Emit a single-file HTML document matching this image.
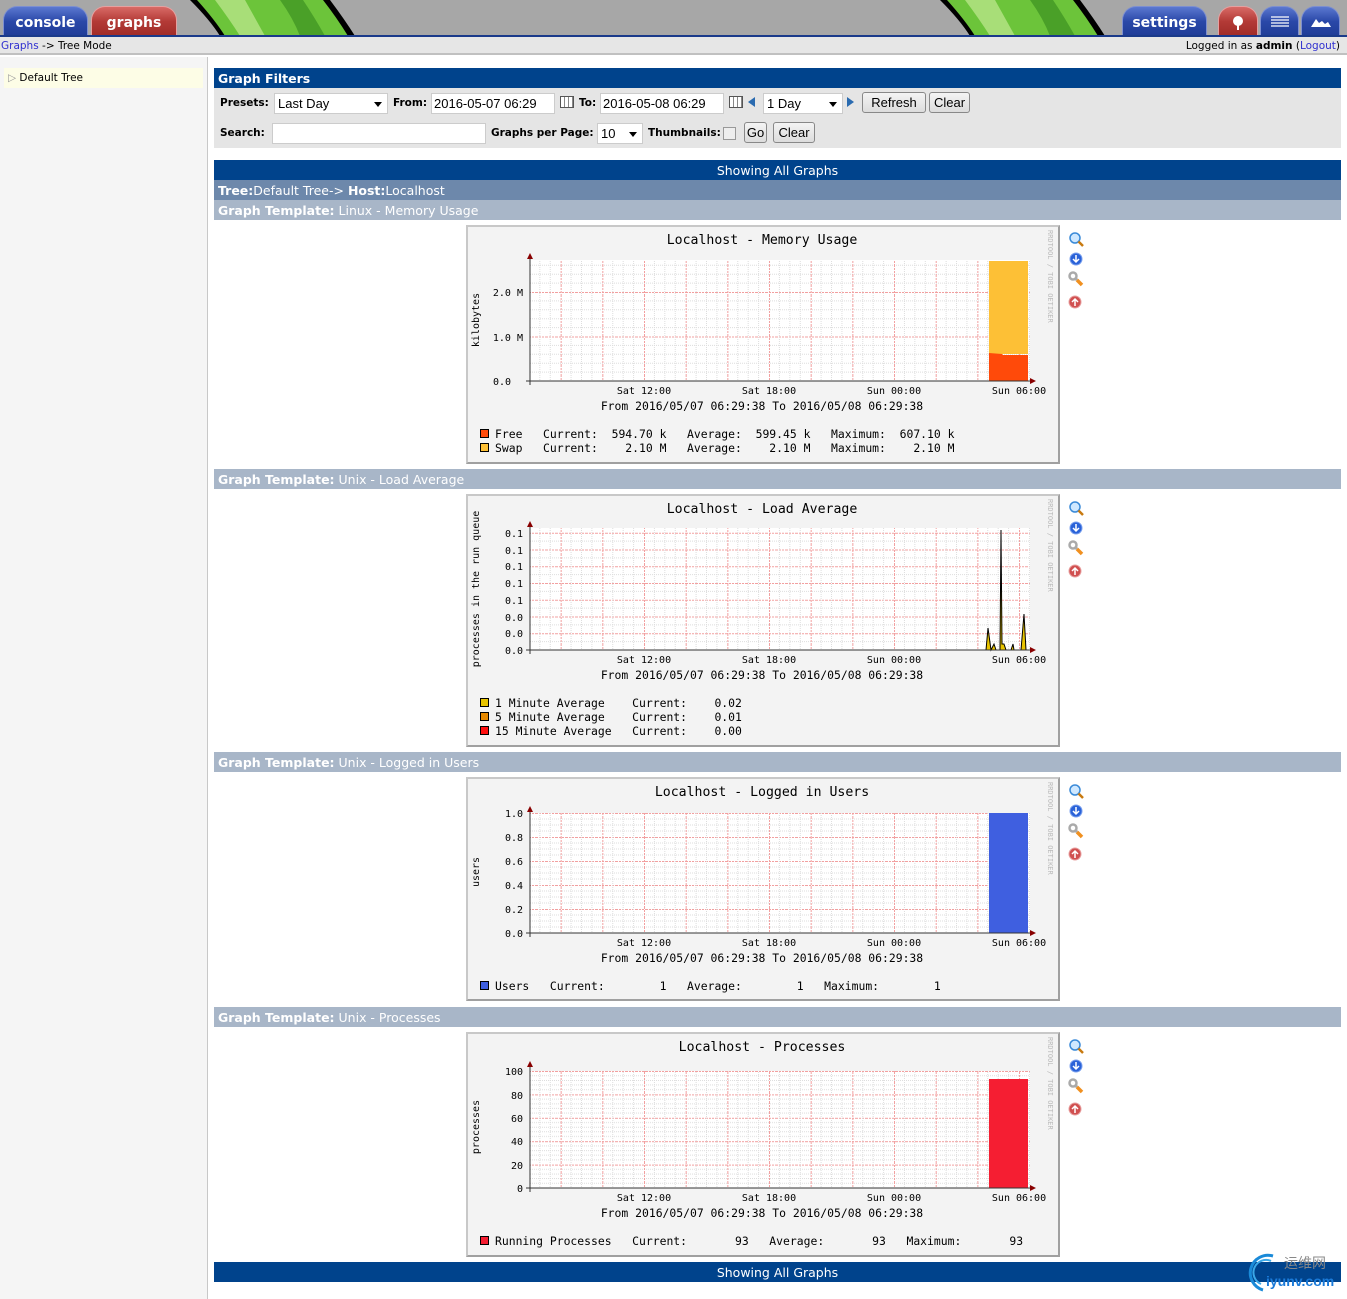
<!DOCTYPE html>
<html><head><meta charset="utf-8">
<style>
*{margin:0;padding:0;box-sizing:border-box}
body{width:1347px;height:1299px;position:relative;background:#fff;font-family:"DejaVu Sans","Liberation Sans",sans-serif;font-size:11px;overflow:hidden}
.a{position:absolute}
.tab{position:absolute;top:6px;height:30px;border-radius:14px 14px 0 0;color:#fff;font-weight:bold;font-size:14px;text-align:center;line-height:32px;border:1px solid #7d8fd0;border-bottom:none}
.blue{background:linear-gradient(#5b78d0,#2a48a8 50%,#1f3c97)}
.red{background:linear-gradient(#d86a66,#b33a36 50%,#a02c28);border-color:#e6a0a0}
.bar{position:absolute;left:214px;width:1127px;height:20px;color:#fff;font-size:12.5px;line-height:22px;padding-left:4px;font-family:"DejaVu Sans",sans-serif}
.tpl{background:#a8b6c8}
.gbox{position:absolute;left:466px;width:594px;background:#f3f3f3;border:2px solid #c8c8c8;border-right-color:#a0a0a0;border-bottom-color:#a0a0a0}
svg text{white-space:pre}
input.t{position:absolute;height:21px;border:1px solid #ccc;background:#fff;font-size:13px;padding-left:2px;font-family:"Liberation Sans",sans-serif}
.sel{position:absolute;height:21px;border:1px solid #ccc;background:#fff;font-size:13px;padding-left:3px;line-height:19px;font-family:"Liberation Sans",sans-serif}
.sel:after{content:"";position:absolute;right:5px;top:8px;border:4px solid transparent;border-top:5px solid #000}
.btn{position:absolute;height:21px;border:1px solid #888;border-radius:3px;background:linear-gradient(#f4f4f4,#dcdcdc);font-size:13px;line-height:19px;text-align:center;font-family:"Liberation Sans",sans-serif}
.lbl{position:absolute;font-weight:bold;font-size:10.5px}
</style></head><body>
<div class="a" style="left:0;top:0;width:1347px;height:35px;background:#a7a7a7"></div>
<svg class="a" style="left:185px;top:0" width="175" height="36"><path d="M5 0 Q25 20 35 36 H170 Q160 20 145 0Z" fill="#000"/><path d="M12 0 Q30 20 40 36 H163 Q152 18 138 0Z" fill="#6cc43a"/><path d="M30 0 Q45 20 55 36 H80 Q70 18 60 0Z" fill="#a8de78"/><path d="M95 0 Q108 18 115 36 H140 Q130 18 118 0Z" fill="#4aa028"/></svg>
<svg class="a" style="left:935px;top:0" width="175" height="36"><path d="M5 0 Q25 20 35 36 H170 Q160 20 145 0Z" fill="#000"/><path d="M12 0 Q30 20 40 36 H163 Q152 18 138 0Z" fill="#6cc43a"/><path d="M30 0 Q45 20 55 36 H80 Q70 18 60 0Z" fill="#a8de78"/><path d="M95 0 Q108 18 115 36 H140 Q130 18 118 0Z" fill="#4aa028"/></svg>
<div class="tab blue" style="left:3px;width:85px">console</div>
<div class="tab red" style="left:91px;width:86px">graphs</div>
<div class="tab blue" style="left:1122px;width:85px">settings</div>
<div class="tab red" style="left:1218px;width:40px"><svg width="16" height="16" style="margin-top:8px"><circle cx="8" cy="6" r="5" fill="#fff"/><path d="M8 9V15" stroke="#fff" stroke-width="2"/></svg></div>
<div class="tab blue" style="left:1260px;width:39px"><svg width="20" height="14" style="margin-top:8px"><path d="M1 2H19M1 5H19M1 8H19M1 11H19" stroke="#fff" stroke-width="1.3"/></svg></div>
<div class="tab blue" style="left:1301px;width:39px"><svg width="22" height="14" style="margin-top:8px"><path d="M1 12L6 4L9 8L12 6L15 9L18 7L21 12Z" fill="#fff"/></svg></div>
<div class="a" style="left:0;top:35px;width:1347px;height:2px;background:#1a3a8a"></div>
<div class="a" style="left:0;top:37px;width:1347px;height:18px;background:#e6e6e6;border-bottom:2px solid #c0c0c0"></div>
<div class="a" style="left:1px;top:40px;font-size:10.5px"><span style="color:#3030d0">Graphs</span> -&gt; Tree Mode</div>
<div class="a" style="right:7px;top:40px;font-size:10.5px">Logged in as <b>admin</b> (<span style="color:#3030d0">Logout</span>)</div>
<div class="a" style="left:0;top:57px;width:208px;height:1242px;background:#f5f5f5;border-right:1px solid #c8c8c8"></div>
<div class="a" style="left:4px;top:68px;width:199px;height:20px;background:#fdfde6"></div>
<div class="a" style="left:8px;top:72px;font-size:10.5px"><span style="color:#999">&#9655;</span> Default Tree</div>
<div class="bar" style="top:68px;background:#00438c;font-weight:bold">Graph Filters</div>
<div class="a" style="left:214px;top:88px;width:1127px;height:60px;background:#e5e5e5"></div>
<div class="lbl" style="left:220px;top:97px">Presets:</div>
<div class="sel" style="left:274px;top:93px;width:114px">Last Day</div>
<div class="lbl" style="left:393px;top:97px">From:</div>
<input class="t" style="left:431px;top:93px;width:124px" value="2016-05-07 06:29">
<div class="a" style="left:560px;top:96px;width:14px;height:12px;border:1px solid #555;background:repeating-linear-gradient(90deg,#fff 0 3px,#888 3px 4px)"></div>
<div class="lbl" style="left:579px;top:97px">To:</div>
<input class="t" style="left:600px;top:93px;width:124px" value="2016-05-08 06:29">
<div class="a" style="left:729px;top:96px;width:14px;height:12px;border:1px solid #555;background:repeating-linear-gradient(90deg,#fff 0 3px,#888 3px 4px)"></div>
<div class="a" style="left:748px;top:97px;border:5px solid transparent;border-right:7px solid #2a6bb0;border-left:none"></div>
<div class="sel" style="left:763px;top:93px;width:80px">1 Day</div>
<div class="a" style="left:847px;top:97px;border:5px solid transparent;border-left:7px solid #2a6bb0;border-right:none"></div>
<div class="btn" style="left:862px;top:92px;width:64px">Refresh</div>
<div class="btn" style="left:929px;top:92px;width:41px">Clear</div>
<div class="lbl" style="left:220px;top:127px">Search:</div>
<input class="t" style="left:272px;top:123px;width:214px">
<div class="lbl" style="left:491px;top:127px">Graphs per Page:</div>
<div class="sel" style="left:597px;top:123px;width:46px">10</div>
<div class="lbl" style="left:648px;top:127px">Thumbnails:</div>
<div class="a" style="left:723px;top:127px;width:13px;height:13px;border:1px solid #999;background:#eee"></div>
<div class="btn" style="left:744px;top:122px;width:23px">Go</div>
<div class="btn" style="left:773px;top:122px;width:42px">Clear</div>
<div class="bar" style="top:160px;background:#00438c;text-align:center;padding:0">Showing All Graphs</div>
<div class="bar" style="top:180px;background:#6d88ab"><b>Tree:</b>Default Tree-&gt; <b>Host:</b>Localhost</div>
<div class="bar tpl" style="top:200px"><b>Graph Template:</b> Linux - Memory Usage</div>
<div class="bar tpl" style="top:469px"><b>Graph Template:</b> Unix - Load Average</div>
<div class="bar tpl" style="top:752px"><b>Graph Template:</b> Unix - Logged in Users</div>
<div class="bar tpl" style="top:1007px"><b>Graph Template:</b> Unix - Processes</div>
<div class="bar" style="top:1262px;background:#00438c;text-align:center;padding:0">Showing All Graphs</div>

<svg width="0" height="0" style="position:absolute">
<defs>
<pattern id="pv" patternUnits="userSpaceOnUse" x="178" y="0" width="41.67" height="10">
<path d="M10.42 0V10M20.83 0V10M31.25 0V10" stroke="#ddd" stroke-width="1" stroke-dasharray="1,1"/>
<path d="M0.5 0V10" stroke="#f2a0a0" stroke-width="1" stroke-dasharray="2,1"/>
</pattern>
</defs>
</svg>

<div class="gbox" style="top:225px;height:239px"></div>
<svg class="a" style="left:466px;top:225px" width="594" height="239" font-family="DejaVu Sans Mono,monospace">
<defs><pattern id="h1" patternUnits="userSpaceOnUse" x="0" y="156" width="10" height="44.5"><path d="M0 8.9H10M0 17.8H10M0 26.7H10M0 35.6H10" stroke="#ddd" stroke-dasharray="1,1"/><path d="M0 0.5H10" stroke="#f2a0a0" stroke-dasharray="2,1"/></pattern></defs>
<rect x="64" y="35" width="500" height="121" fill="#fff"/>
<rect x="64" y="35" width="500" height="121" fill="url(#h1)"/>
<rect x="64" y="35" width="500" height="121" fill="url(#pv)"/>
<rect x="523" y="36" width="39" height="93" fill="#fdc036"/>
<path d="M523 128L536 129L537 130H562V156H523Z" fill="#ff4a0a"/>
<path d="M64 30V160M60 156H568" stroke="#333"/><path d="M61 34L64 28L67 34ZM564 153L570 156L564 159Z" fill="#800"/>
<text x="296" y="19" font-size="13.2" text-anchor="middle" fill="#000">Localhost - Memory Usage</text>
<text x="57" y="71" font-size="10" text-anchor="end">2.0 M</text><text x="57" y="116" font-size="10" text-anchor="end">1.0 M</text><text x="45" y="160" font-size="10" text-anchor="end">0.0</text>
<text transform="translate(13,95) rotate(-90)" font-size="10" text-anchor="middle">kilobytes</text>
<text x="178" y="169" font-size="10" text-anchor="middle">Sat 12:00</text><text x="303" y="169" font-size="10" text-anchor="middle">Sat 18:00</text><text x="428" y="169" font-size="10" text-anchor="middle">Sun 00:00</text><text x="553" y="169" font-size="10" text-anchor="middle">Sun 06:00</text>
<text x="296" y="185" font-size="11.4" text-anchor="middle">From 2016/05/07 06:29:38 To 2016/05/08 06:29:38</text>
<rect x="14.5" y="204.5" width="8" height="8" fill="#ff4a0a" stroke="#000"/><rect x="14.5" y="218.5" width="8" height="8" fill="#fdc036" stroke="#000"/>
<text x="29" y="213" font-size="11.4">Free   Current:  594.70 k   Average:  599.45 k   Maximum:  607.10 k</text>
<text x="29" y="227" font-size="11.4">Swap   Current:    2.10 M   Average:    2.10 M   Maximum:    2.10 M</text>
<text transform="translate(582,5) rotate(90)" font-size="7" fill="#bbb">RRDTOOL / TOBI OETIKER</text>
</svg>

<div class="gbox" style="top:494px;height:253px"></div>
<svg class="a" style="left:466px;top:494px" width="594" height="253" font-family="DejaVu Sans Mono,monospace">
<defs><pattern id="h2" patternUnits="userSpaceOnUse" x="0" y="156" width="10" height="16.75"><path d="M0 8.4H10" stroke="#ddd" stroke-dasharray="1,1"/><path d="M0 0.5H10" stroke="#f2a0a0" stroke-dasharray="2,1"/></pattern></defs>
<rect x="64" y="34" width="500" height="122" fill="#fff"/>
<rect x="64" y="34" width="500" height="122" fill="url(#h2)"/>
<rect x="64" y="34" width="500" height="122" fill="url(#pv)"/>
<path d="M520 156L522 134L525 156L528 150L530 156L534 156L535 36L536 150L538 150L540 156L545 156L547 150L548 156L555 156L558 120L560 156Z" fill="#e8c400" stroke="#000"/>
<path d="M64 28V160M60 156H568" stroke="#333"/><path d="M61 33L64 27L67 33ZM564 153L570 156L564 159Z" fill="#800"/>
<text x="296" y="19" font-size="13.2" text-anchor="middle">Localhost - Load Average</text>
<g font-size="10" text-anchor="end"><text x="57" y="43">0.1</text><text x="57" y="60">0.1</text><text x="57" y="76">0.1</text><text x="57" y="93">0.1</text><text x="57" y="110">0.1</text><text x="57" y="127">0.0</text><text x="57" y="143">0.0</text><text x="57" y="160">0.0</text></g>
<text transform="translate(13,95) rotate(-90)" font-size="10" text-anchor="middle">processes in the run queue</text>
<g font-size="10" text-anchor="middle"><text x="178" y="169">Sat 12:00</text><text x="303" y="169">Sat 18:00</text><text x="428" y="169">Sun 00:00</text><text x="553" y="169">Sun 06:00</text></g>
<text x="296" y="185" font-size="11.4" text-anchor="middle">From 2016/05/07 06:29:38 To 2016/05/08 06:29:38</text>
<rect x="14.5" y="204.5" width="8" height="8" fill="#e8c400" stroke="#000"/><rect x="14.5" y="218.5" width="8" height="8" fill="#e88a00" stroke="#000"/><rect x="14.5" y="232.5" width="8" height="8" fill="#ff1010" stroke="#000"/>
<g font-size="11.4"><text x="29" y="213">1 Minute Average    Current:    0.02</text><text x="29" y="227">5 Minute Average    Current:    0.01</text><text x="29" y="241">15 Minute Average   Current:    0.00</text></g>
<text transform="translate(582,5) rotate(90)" font-size="7" fill="#bbb">RRDTOOL / TOBI OETIKER</text>
</svg>

<div class="gbox" style="top:777px;height:224px"></div>
<svg class="a" style="left:466px;top:777px" width="594" height="224" font-family="DejaVu Sans Mono,monospace">
<defs><pattern id="h3" patternUnits="userSpaceOnUse" x="0" y="156" width="10" height="24"><path d="M0 6H10M0 12H10M0 18H10" stroke="#ddd" stroke-dasharray="1,1"/><path d="M0 0.5H10" stroke="#f2a0a0" stroke-dasharray="2,1"/></pattern></defs>
<rect x="64" y="36" width="500" height="120" fill="#fff"/>
<rect x="64" y="36" width="500" height="120" fill="url(#h3)"/>
<rect x="64" y="36" width="500" height="120" fill="url(#pv)"/>
<rect x="523" y="36" width="39" height="120" fill="#3f5fe0"/>
<path d="M64 30V160M60 156H568" stroke="#333"/><path d="M61 35L64 29L67 35ZM564 153L570 156L564 159Z" fill="#800"/>
<text x="296" y="19" font-size="13.2" text-anchor="middle">Localhost - Logged in Users</text>
<g font-size="10" text-anchor="end"><text x="57" y="40">1.0</text><text x="57" y="64">0.8</text><text x="57" y="88">0.6</text><text x="57" y="112">0.4</text><text x="57" y="136">0.2</text><text x="57" y="160">0.0</text></g>
<text transform="translate(13,95) rotate(-90)" font-size="10" text-anchor="middle">users</text>
<g font-size="10" text-anchor="middle"><text x="178" y="169">Sat 12:00</text><text x="303" y="169">Sat 18:00</text><text x="428" y="169">Sun 00:00</text><text x="553" y="169">Sun 06:00</text></g>
<text x="296" y="185" font-size="11.4" text-anchor="middle">From 2016/05/07 06:29:38 To 2016/05/08 06:29:38</text>
<rect x="14.5" y="204.5" width="8" height="8" fill="#3f5fe0" stroke="#000"/>
<text x="29" y="213" font-size="11.4">Users   Current:        1   Average:        1   Maximum:        1</text>
<text transform="translate(582,5) rotate(90)" font-size="7" fill="#bbb">RRDTOOL / TOBI OETIKER</text>
</svg>

<div class="gbox" style="top:1032px;height:225px"></div>
<svg class="a" style="left:466px;top:1032px" width="594" height="225" font-family="DejaVu Sans Mono,monospace">
<defs><pattern id="h4" patternUnits="userSpaceOnUse" x="0" y="156" width="10" height="23.4"><path d="M0 4.7H10M0 9.4H10M0 14H10M0 18.7H10" stroke="#ddd" stroke-dasharray="1,1"/><path d="M0 0.5H10" stroke="#f2a0a0" stroke-dasharray="2,1"/></pattern></defs>
<rect x="64" y="39" width="500" height="117" fill="#fff"/>
<rect x="64" y="39" width="500" height="117" fill="url(#h4)"/>
<rect x="64" y="39" width="500" height="117" fill="url(#pv)"/>
<rect x="523" y="47" width="39" height="109" fill="#f51e32"/>
<path d="M64 30V160M60 156H568" stroke="#333"/><path d="M61 35L64 29L67 35ZM564 153L570 156L564 159Z" fill="#800"/>
<text x="296" y="19" font-size="13.2" text-anchor="middle">Localhost - Processes</text>
<g font-size="10" text-anchor="end"><text x="57" y="43">100</text><text x="57" y="67">80</text><text x="57" y="90">60</text><text x="57" y="113">40</text><text x="57" y="137">20</text><text x="57" y="160">0</text></g>
<text transform="translate(13,95) rotate(-90)" font-size="10" text-anchor="middle">processes</text>
<g font-size="10" text-anchor="middle"><text x="178" y="169">Sat 12:00</text><text x="303" y="169">Sat 18:00</text><text x="428" y="169">Sun 00:00</text><text x="553" y="169">Sun 06:00</text></g>
<text x="296" y="185" font-size="11.4" text-anchor="middle">From 2016/05/07 06:29:38 To 2016/05/08 06:29:38</text>
<rect x="14.5" y="204.5" width="8" height="8" fill="#f51e32" stroke="#000"/>
<text x="29" y="213" font-size="11.4">Running Processes   Current:       93   Average:       93   Maximum:       93</text>
<text transform="translate(582,5) rotate(90)" font-size="7" fill="#bbb">RRDTOOL / TOBI OETIKER</text>
</svg>

<svg width="0" height="0" style="position:absolute"><defs>
<g id="ic">
<circle cx="7" cy="7" r="5" fill="#cfe8ff" stroke="#3a8ad8" stroke-width="1.5"/><path d="M10.5 10.5L15 15" stroke="#c87a10" stroke-width="2.5"/>
<circle cx="8" cy="28" r="6" fill="#2a62d8" stroke="#7aa0ee"/><path d="M8 24V31M5 28L8 31L11 28" stroke="#fff" stroke-width="1.5" fill="none"/>
<circle cx="5" cy="45" r="3.5" fill="none" stroke="#aaa" stroke-width="2.5"/><path d="M7 47L9 49" stroke="#aaa" stroke-width="3"/><path d="M9 49L14 54" stroke="#f09020" stroke-width="3.5"/>
<circle cx="7" cy="71" r="6" fill="#d05050" stroke="#e8a0a0"/><path d="M7 75V68M4 71L7 68L10 71" stroke="#fff" stroke-width="1.5" fill="none"/>
</g></defs></svg>
<svg class="a" style="left:1068px;top:231px" width="18" height="80"><use href="#ic"/></svg>
<svg class="a" style="left:1068px;top:500px" width="18" height="80"><use href="#ic"/></svg>
<svg class="a" style="left:1068px;top:783px" width="18" height="80"><use href="#ic"/></svg>
<svg class="a" style="left:1068px;top:1038px" width="18" height="80"><use href="#ic"/></svg>

<svg class="a" style="left:1243px;top:1252px" width="40" height="40"><path d="M30 4A17 17 0 1 0 20 38" stroke="#1a8ad8" stroke-width="3" fill="none"/><path d="M28 9A12 12 0 1 0 18 32" stroke="#3aa8e8" stroke-width="2" fill="none"/></svg>
<div class="a" style="left:1284px;top:1253px;color:#888;font-size:14px;font-family:'Noto Sans CJK SC',sans-serif">运维网</div>
<div class="a" style="left:1266px;top:1273px;color:#1a7ad8;font-size:14px;font-weight:bold;font-family:'Liberation Sans',sans-serif">iyunv.com</div>
</body></html>
